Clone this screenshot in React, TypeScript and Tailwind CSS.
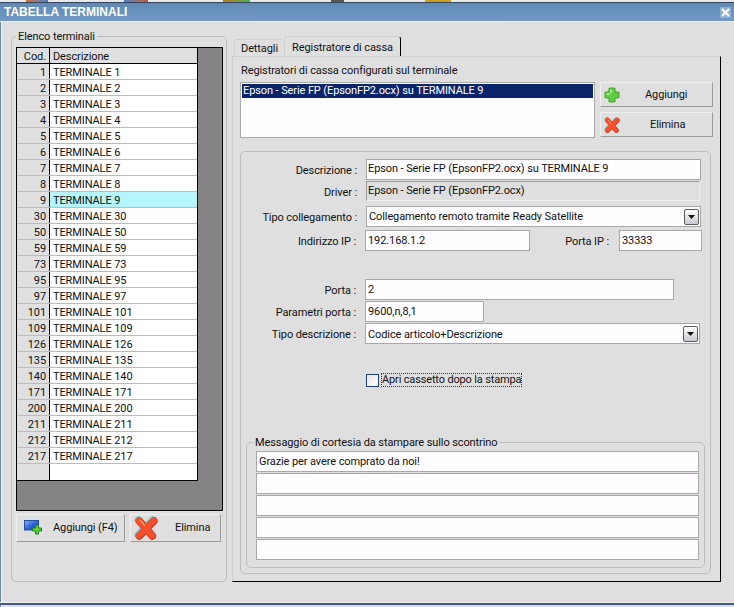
const rows = [1, 2, 3, 4, 5, 6, 7, 8, 9, 30, 50, 59, 73, 95, 97, 101, 109, 126, 135, 140, 171, 200, 211, 212, 217];

const raisedButton = "flex items-center border border-[#f0f0f0] border-b-[#9a9a9a] border-r-[#9a9a9a]";
const textBox = "h-full border border-[#a8a8a8] bg-[#fffdff] pl-[2px] pt-[3px]";

function PlusIcon() {
  return (
    <svg width="16" height="16" viewBox="0 0 16 16" className="shrink-0">
      <path d="M5.500 1h5l.5.500V5h3.500l.5.500v5l-.5.500H11v3.500l-.5.500h-5l-.5-.500V11H1.500l-.5-.500v-5l.5-.500H5V1.500z" fill="#62cf43" stroke="#3a9c2a" strokeWidth="1" />
      <path d="M6 2.500h2V6H6zM2.500 6H6v2H2.500z" fill="#9fea7c" />
    </svg>
  );
}

function CrossIcon({ size }: { size: number }) {
  return (
    <svg width={size} height={size} viewBox="0 0 24 24" className="shrink-0">
      <g strokeLinecap="round" strokeWidth="7.500" fill="none">
        <path d="M5 4.500l13 15M19.500 4.500L5 19.500" stroke="#7fd0d4" transform="translate(-0.700 -0.600)" />
        <path d="M5 4.500l13 15M19.500 4.500L5 19.500" stroke="#b8301a" transform="translate(0.400 0.500)" />
        <path d="M5 4.500l13 15M19.500 4.500L5 19.500" stroke="#f5502b" strokeWidth="6.800" />
      </g>
      <path d="M6 4l5 6" stroke="#ff8c68" strokeWidth="1.500" fill="none" />
    </svg>
  );
}

function AddTerminalIcon() {
  return (
    <svg width="20" height="16" viewBox="0 0 20 16" className="shrink-0">
      <defs>
        <linearGradient id="screen" x1="0" y1="0" x2="1" y2="1">
          <stop offset="0" stopColor="#8db2f2" />
          <stop offset="0.5" stopColor="#2f66dc" />
          <stop offset="1" stopColor="#1d46a8" />
        </linearGradient>
      </defs>
      <rect x="0.500" y="0.500" width="14" height="9.500" fill="url(#screen)" stroke="#24509f" strokeWidth="1" />
      <path d="M11.500 5h3v3h3v3h-3v3h-3v-3h-3V8h3z" fill="#5fcf3a" stroke="#1f7f1c" strokeWidth="1" />
    </svg>
  );
}

function ComboArrow() {
  return (
    <div className="ml-auto mr-[1px] flex h-[16px] w-[15px] items-center justify-center rounded-[2px] border border-[#5a5a5a] bg-gradient-to-b from-white to-[#c8c8d0]">
      <svg width="7" height="4" viewBox="0 0 7 4">
        <path d="M0 0h7L3.500 4z" fill="#111" />
      </svg>
    </div>
  );
}

export default function App() {
  return (
    <div className="relative h-[607px] w-[734px] overflow-hidden bg-[#dfdfdf] font-['Roboto',sans-serif] text-[11px] leading-[14px] tracking-[-0.1px] text-[#111]">
      {/* Desktop behind the window */}
      <div className="flex h-[3px] border-b border-[#33465e] bg-[#e8e8e8]">
        <div className="ml-[26px] h-full w-[22px] bg-gradient-to-r from-[#d8642a] to-[#3f7fc4]" />
        <div className="ml-[76px] h-full w-[24px] bg-gradient-to-r from-[#3f7fc4] to-[#c8502a]" />
        <div className="ml-[75px] h-full w-[27px] bg-gradient-to-r from-[#b07a18] to-[#3cb050]" />
        <div className="ml-[81px] h-full w-[13px] bg-[#555555]" />
        <div className="ml-[81px] h-full w-[26px] bg-[#d0a020]" />
      </div>

      {/* Title bar */}
      <div className="flex h-[19px] items-center justify-between border-b border-[#eef2f6] bg-gradient-to-b from-[#6089b6] to-[#7299c4] pl-[4px] pr-[3px] font-['Liberation_Sans',sans-serif] text-[12px] font-bold tracking-normal text-white">
        <span>TABELLA TERMINALI</span>
        <div className="flex h-[11px] w-[11px] items-center justify-center bg-[#8fb0d2]">
          <svg width="9" height="9" viewBox="0 0 9 9">
            <path d="M1 1l7 7M8 1L1 8" stroke="#fff" strokeWidth="2" />
          </svg>
        </div>
      </div>

      <div className="flex items-start pl-[11px] pt-[7px]">
        {/* Elenco terminali */}
        <fieldset className="h-[553px] w-[216px] rounded-[5px] border border-[#bdbdbd]">
          <legend className="-mb-[1px] ml-[4px] px-[2px] pt-[1px]">Elenco terminali</legend>
          <div className="ml-[4px] mt-[4px] w-[207px]">
            <div className="h-[464px] border border-black bg-[#858385]">
              <div className="flex h-[433px] w-[181px] flex-col border-b border-r border-black">
                <div className="flex h-[16px] border-b border-black bg-[#e0e0e0]">
                  <div className="w-[33px] border-r border-black pr-[3px] pt-[2px] text-right">Cod.</div>
                  <div className="pl-[3px] pt-[2px]">Descrizione</div>
                </div>
                {rows.map((n) => (
                  <div key={n} className="flex h-[16px] border-b border-[#bcbcbc]">
                    <div className="w-[33px] border-r border-black bg-[#e0e0e0] pr-[3px] pt-[2px] text-right">{n}</div>
                    <div className={`flex-1 pl-[3px] pt-[2px] ${n === 9 ? "bg-[#b4f6fa]" : "bg-white"}`}>TERMINALE {n}</div>
                  </div>
                ))}
                <div className="flex flex-1">
                  <div className="w-[33px] border-r border-black bg-[#e0e0e0]" />
                  <div className="flex-1 bg-white" />
                </div>
              </div>
            </div>
            <div className="mt-[3px] flex gap-[5px]">
              <button className={`${raisedButton} h-[28px] w-[109px] pl-[7px]`}>
                <AddTerminalIcon />
                <span className="ml-[9px]">Aggiungi (F4)</span>
              </button>
              <button className={`${raisedButton} h-[28px] w-[91px] pl-[3px]`}>
                <CrossIcon size={24} />
                <span className="ml-[17px]">Elimina</span>
              </button>
            </div>
          </div>
        </fieldset>

        <div className="ml-[5px] mt-[7px] w-[489px]">
          {/* Tabs */}
          <div className="flex h-[20px] items-end pl-[2px]">
            <div className="flex h-[17px] w-[50px] items-center justify-center rounded-t-[3px] border-l border-t border-[#cfcfcf] pt-[2px]">Dettagli</div>
            <div className="flex h-[20px] w-[117px] items-center justify-center rounded-t-[3px] border-l border-r border-t border-[#cfcfcf] border-r-black pt-[2px]">Registratore di cassa</div>
          </div>

          {/* Tab panel */}
          <div className="h-[526px] border border-[#cfcfcf] border-b-black border-r-black pl-[7px] pt-[7px]">
            <div className="pl-[1px]">Registratori di cassa configurati sul terminale</div>
            <div className="mt-[4px] flex items-start">
              <div className="h-[56px] w-[355px] border border-[#a8a8a8] bg-[#fffdff] p-[1px]">
                <div className="bg-[#0a246a] px-[1px] text-white">Epson - Serie FP (EpsonFP2.ocx) su TERMINALE 9</div>
              </div>
              <div className="ml-[5px] flex flex-col gap-[5px]">
                <button className={`${raisedButton} h-[25px] w-[113px] pl-[3px]`}>
                  <PlusIcon />
                  <span className="ml-[25px]">Aggiungi</span>
                </button>
                <button className={`${raisedButton} h-[25px] w-[113px] pl-[3px]`}>
                  <CrossIcon size={16} />
                  <span className="ml-[30px]">Elimina</span>
                </button>
              </div>
            </div>

            {/* Driver settings */}
            <div className="mt-[13px] h-[423px] w-[471px] rounded-[5px] border border-[#bdbdbd] pt-[7px]">
              <div className="flex h-[21px] items-center">
                <div className="w-[116px] pt-[2px] text-right">Descrizione :</div>
                <div className={`${textBox} ml-[9px] w-[335px] !pl-[1px] !pt-[2px]`}>Epson - Serie FP (EpsonFP2.ocx) su TERMINALE 9</div>
              </div>
              <div className="mt-[1px] flex h-[20px] items-center">
                <div className="w-[116px] pt-[4px] text-right">Driver :</div>
                <div className="ml-[9px] h-full w-[334px] border border-[#eeeeee] border-l-[#9a9a9a] border-t-[#9a9a9a] pl-[1px] pt-[2px]">Epson - Serie FP (EpsonFP2.ocx)</div>
              </div>
              <div className="mt-[5px] flex h-[21px] items-center">
                <div className="w-[116px] pt-[2px] text-right">Tipo collegamento :</div>
                <div className="ml-[9px] flex h-full w-[335px] items-center border border-[#a8a8a8] bg-[#fffdff] pl-[2px]">
                  Collegamento remoto tramite Ready Satellite
                  <ComboArrow />
                </div>
              </div>
              <div className="mt-[3px] flex h-[21px] items-center">
                <div className="w-[115px] pt-[2px] text-right">Indirizzo IP :</div>
                <div className={`${textBox} ml-[9px] w-[165px]`}>192.168.1.2</div>
                <div className="w-[79px] pt-[2px] text-right">Porta IP :</div>
                <div className={`${textBox} ml-[10px] w-[83px]`}>33333</div>
              </div>
              <div className="mt-[28px] flex h-[21px] items-center">
                <div className="w-[115px] pt-[2px] text-right">Porta :</div>
                <div className={`${textBox} ml-[9px] w-[309px]`}>2</div>
              </div>
              <div className="mt-[1px] flex h-[21px] items-center">
                <div className="w-[115px] pt-[2px] text-right">Parametri porta :</div>
                <div className={`${textBox} ml-[9px] w-[119px]`}>9600,n,8,1</div>
              </div>
              <div className="mt-[1px] flex h-[21px] items-center">
                <div className="w-[115px] pt-[2px] text-right">Tipo descrizione :</div>
                <div className="ml-[9px] flex h-full w-[335px] items-center border border-[#a8a8a8] bg-[#fffdff] pl-[2px]">
                  <span className="pt-[2px]">Codice articolo+Descrizione</span>
                  <ComboArrow />
                </div>
              </div>
              <div className="ml-[125px] mt-[29px] flex h-[14px] items-center">
                <div className="h-[13px] w-[13px] border border-[#1c3f6e] bg-gradient-to-br from-[#e4e4e0] to-white" />
                <div className="ml-[2px] w-[141px] whitespace-nowrap border border-dotted border-[#333] leading-[12px] tracking-[-0.15px]">Apri cassetto dopo la stampa</div>
              </div>

              {/* Messaggio di cortesia */}
              <fieldset className="ml-[5px] mt-[48px] h-[133px] w-[459px] rounded-[5px] border border-[#bdbdbd]">
                <legend className="-mb-[1px] ml-[6px] px-[2px] pt-[1px]">Messaggio di cortesia da stampare sullo scontrino</legend>
                <div className="ml-[9px] mt-[2px] flex w-[443px] flex-col gap-[1px]">
                  <div className="h-[21px] border border-[#a8a8a8] bg-[#fffdff] pl-[2px] pt-[3px]">Grazie per avere comprato da noi!</div>
                  <div className="h-[21px] border border-[#a8a8a8] bg-[#fffdff]" />
                  <div className="h-[21px] border border-[#a8a8a8] bg-[#fffdff]" />
                  <div className="h-[21px] border border-[#a8a8a8] bg-[#fffdff]" />
                  <div className="h-[21px] border border-[#a8a8a8] bg-[#fffdff]" />
                </div>
              </fieldset>
            </div>
          </div>
        </div>
      </div>

      {/* Window edges */}
      <div className="absolute bottom-0 left-0 top-[22px] w-[2px] border-l border-[#6a86a8] bg-[#f0f0f0]" />
      <div className="absolute bottom-[2px] left-0 right-0 h-[3px] border-b-2 border-[#3c5a85] bg-[#f0f0f0]" />
    </div>
  );
}
